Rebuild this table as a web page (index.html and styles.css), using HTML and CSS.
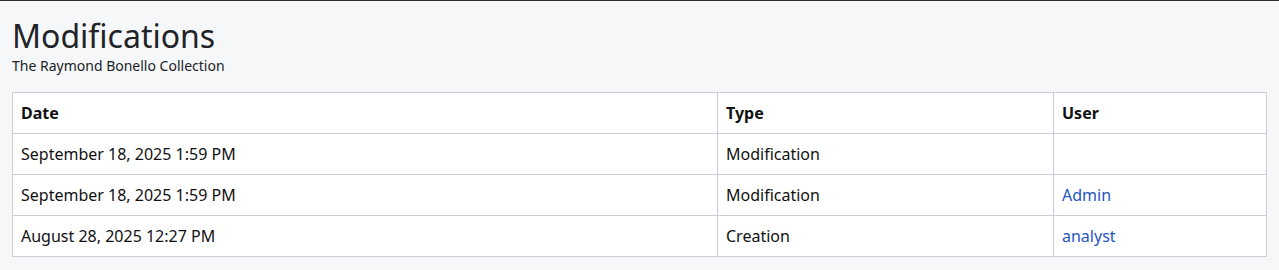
FILE: index.html
```html
<!DOCTYPE html>
<html>
<head>
<meta charset="utf-8">
<link rel="stylesheet" href="styles.css">
</head>
<body>
<div class="page">
  <h1 class="title">Modifications</h1>
  <div class="subtitle">The Raymond Bonello Collection</div>
  <table class="mods">
    <colgroup>
      <col class="c-date"><col class="c-type"><col class="c-user">
    </colgroup>
    <thead>
      <tr><th>Date</th><th>Type</th><th>User</th></tr>
    </thead>
    <tbody>
      <tr><td>September 18, 2025 1:59 PM</td><td>Modification</td><td></td></tr>
      <tr><td>September 18, 2025 1:59 PM</td><td>Modification</td><td><a href="#">Admin</a></td></tr>
      <tr><td>August 28, 2025 12:27 PM</td><td>Creation</td><td><a href="#">analyst</a></td></tr>
    </tbody>
  </table>
</div>
</body>
</html>
```
FILE: styles.css
```css
html, body {
  margin: 0;
  padding: 0;
  background: #f6f7f9;
}
body {
  border-top: 1px solid #2b2d31;
  font-family: "Noto Sans", "Open Sans", sans-serif;
  color: #1d1f22;
}
.page {
  padding: 16px 12px 12px 12px;
}
.title {
  margin: 0;
  font-size: 32px;
  font-weight: 400;
  line-height: 38px;
  color: #212326;
}
.subtitle {
  font-size: 14px;
  line-height: 19px;
  margin-top: 1px;
  color: #212326;
}
.mods {
  margin-top: 17px;
  width: 100%;
  border-collapse: collapse;
  background: #fff;
  border: 1px solid #c9ced8;
  font-size: 16px;
}
.c-date { width: 705px; }
.c-type { width: 336px; }
.mods th, .mods td {
  border: 1px solid #c9ced8;
  text-align: left;
  padding: 0 8px;
  height: 41px;
  box-sizing: border-box;
  color: #111;
}
.mods th {
  font-weight: 700;
}
.mods a {
  color: #1f55c4;
  text-decoration: none;
}
```
